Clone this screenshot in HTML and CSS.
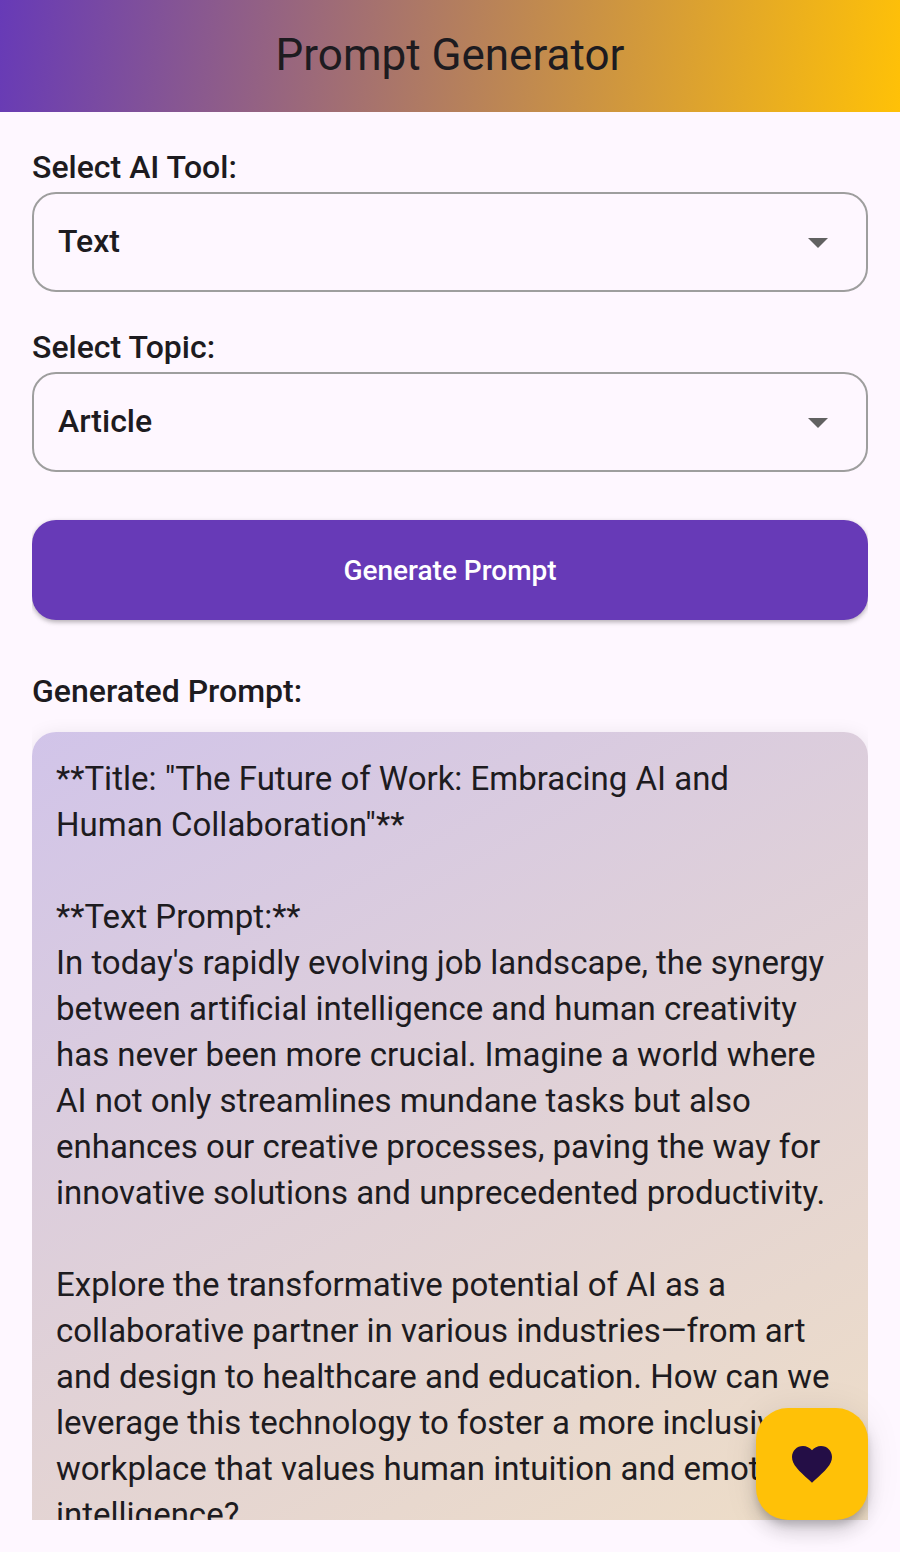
FILE: index.html
```html
<!DOCTYPE html>
<html lang="en">
<head>
<meta charset="utf-8">
<meta name="viewport" content="width=device-width, initial-scale=1">
<title>Prompt Generator</title>
<link rel="stylesheet" href="styles.css">
</head>
<body>
<div class="app">
  <header class="app-bar"><h1 class="app-title">Prompt Generator</h1></header>
  <main class="content">
    <form class="form">
      <div class="field">
        <label class="label" for="tool">Select AI Tool:</label>
        <div class="select-box">
          <select class="select" id="tool"><option>Text</option></select>
          <svg class="arrow" viewBox="0 0 24 24" aria-hidden="true"><path d="M7 10l5 5 5-5z"/></svg>
        </div>
      </div>
      <div class="field">
        <label class="label" for="topic">Select Topic:</label>
        <div class="select-box">
          <select class="select" id="topic"><option>Article</option></select>
          <svg class="arrow" viewBox="0 0 24 24" aria-hidden="true"><path d="M7 10l5 5 5-5z"/></svg>
        </div>
      </div>
      <button class="generate" type="button">Generate Prompt</button>
    </form>
    <h2 class="label result-label">Generated Prompt:</h2>
    <article class="result">
      <p class="text">**Title: "The Future of Work: Embracing AI and<br>Human Collaboration"**</p>
      <p class="text">**Text Prompt:**<br>In today's rapidly evolving job landscape, the synergy<br>between artificial intelligence and human creativity<br>has never been more crucial. Imagine a world where<br>AI not only streamlines mundane tasks but also<br>enhances our creative processes, paving the way for<br>innovative solutions and unprecedented productivity.</p>
      <p class="text">Explore the transformative potential of AI as a<br>collaborative partner in various industries—from art<br>and design to healthcare and education. How can we<br>leverage this technology to foster a more inclusive<br>workplace that values human intuition and emotional<br>intelligence?</p>
    </article>
  </main>
  <button class="fab" type="button" aria-label="Favorites">
    <svg class="heart" viewBox="0 0 24 24" aria-hidden="true"><path d="M12 21.35l-1.45-1.32C5.4 15.36 2 12.28 2 8.5 2 5.42 4.42 3 7.5 3c1.74 0 3.41.81 4.5 2.09C13.09 3.81 14.76 3 16.5 3 19.58 3 22 5.42 22 8.5c0 3.78-3.4 6.86-8.55 11.54L12 21.35z"/></svg>
  </button>
</div>
</body>
</html>
```

FILE: styles.css
```css
* { box-sizing: border-box; }

body {
  margin: 0;
  background: #fef7ff;
  color: #1d1b20;
  font-family: Roboto, "Liberation Sans", sans-serif;
}

.app {
  display: flex;
  flex-direction: column;
  height: 100vh;
}

.app-bar {
  flex: none;
  padding: 28px 32px 30px;
  background: linear-gradient(97deg, #673ab7, #ffc107);
  text-align: center;
}

.app-title {
  margin: 0;
  font-size: 44px;
  line-height: 54px;
  font-weight: 400;
}

.content {
  flex: 1;
  min-height: 0;
  margin: 0 32px 32px;
  padding-top: 32px;
  overflow: hidden;
}

.form {
  display: flex;
  flex-direction: column;
  gap: 32px;
}

.label {
  display: block;
  margin: 0;
  padding-bottom: 2px;
  font-size: 32px;
  line-height: 46px;
  font-weight: 500;
}

.select-box {
  display: grid;
  align-items: center;
}

.select {
  grid-area: 1 / 1;
  appearance: none;
  width: 100%;
  height: 100px;
  padding: 0 72px 2px 24px;
  border: 2px solid #9e9e9e;
  border-radius: 24px;
  background: transparent;
  color: inherit;
  font: 500 32px/48px Roboto, "Liberation Sans", sans-serif;
}

.arrow {
  grid-area: 1 / 1;
  justify-self: end;
  width: 48px;
  height: 48px;
  margin-right: 26px;
  fill: #616161;
  pointer-events: none;
}

.generate {
  height: 100px;
  margin-top: 16px;
  padding: 2px 24px 0;
  border: 0;
  border-radius: 24px;
  background: #673ab7;
  box-shadow: 0 2px 4px rgba(0, 0, 0, 0.22), 0 2px 6px rgba(0, 0, 0, 0.1);
  color: #fff;
  font: 500 28px/40px Roboto, "Liberation Sans", sans-serif;
}

.result-label {
  margin: 48px 0 16px;
}

.result {
  display: flex;
  flex-direction: column;
  gap: 46px;
  min-height: 1500px;
  padding: 24px;
  border-radius: 24px;
  background: linear-gradient(151deg, #d1c4e9, #ffecb3);
  box-shadow: 0 4px 20px rgba(0, 0, 0, 0.1);
}

.text {
  margin: 0;
  font-size: 33px;
  line-height: 46px;
  white-space: nowrap;
}

.fab {
  position: fixed;
  right: 32px;
  bottom: 32px;
  display: grid;
  place-items: center;
  width: 112px;
  height: 112px;
  padding: 0;
  border: 0;
  border-radius: 32px;
  background: #ffc107;
  box-shadow: 0 6px 10px -2px rgba(0, 0, 0, 0.2), 0 12px 20px rgba(0, 0, 0, 0.14), 0 2px 36px rgba(0, 0, 0, 0.08);
}

.heart {
  width: 48px;
  height: 48px;
  fill: #240e46;
}
```
